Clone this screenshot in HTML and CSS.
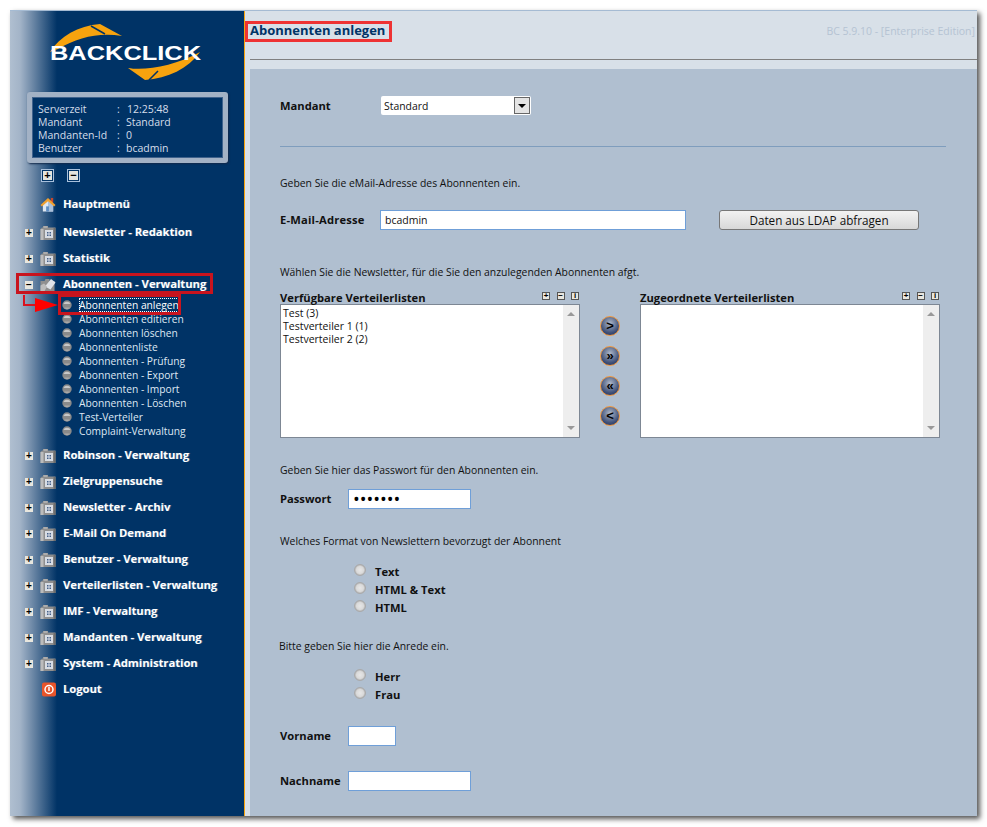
FILE: index.html
```html
<!DOCTYPE html>
<html lang="de">
<head>
    <meta http-equiv="Content-Type" content="text/html; charset=UTF-8">
    <title>Backclick - Abonnenten anlegen</title>
    <link rel="stylesheet" href="styles.css">
</head>
<body>
    <!-- Shared icons -->
    <svg class="defs" width="0" height="0">
        <symbol id="folder" viewBox="0 0 16 15">
            <path d="M1 3.500 2 2.500h1V1h5v1.500h7.500V15H0.500V4z" fill="#8f8f8f"/>
            <path d="M3.500 1.500h4v1h-4z" fill="#c8c8c8"/>
            <path d="M0.500 4h3v11h-3z" fill="#bcbcbc"/>
            <path d="M13.500 3h2v12h-2z" fill="#6d6d6d"/>
            <rect x="5" y="5" width="8" height="8" fill="#d8dde4"/>
            <path d="M7 7h1.500v1.500H7zM9.500 7H11v1.500H9.500zM7 9.500h1.500V11H7zM9.500 9.500H11V11H9.500z" fill="#44608a"/>
        </symbol>
        <symbol id="ball" viewBox="0 0 10 10">
            <circle cx="5" cy="5" r="4.700" fill="#8a8a8a"/>
            <path d="M1.500 4a3.600 3 0 0 1 7 0z" fill="#c8c8c8"/>
            <path d="M2 7.500h6a3.500 3.500 0 0 1-6 0z" fill="#a8a8a8"/>
        </symbol>
    </svg>

    <div class="window">
        <!-- Sidebar -->
        <aside class="sidebar">
            <svg class="logo" width="234" height="81" viewBox="0 0 234 81">
                <path d="M40 41C50 25 68 15 90 13L112 25C90 21 68 26 48 38z" fill="#f7a30e"/>
                <path d="M118 57C135 60 165 55 190 41C178 58 158 67 135 69z" fill="#f7a30e"/>
                <path d="M81 15L95 23M139 69L148 60" stroke="#003366" stroke-width="1.500"/>
                <text class="logo-text" x="40" y="49" textLength="151" lengthAdjust="spacingAndGlyphs">BACKCLICK</text>
            </svg>

            <div class="info-box">
                <span>Serverzeit</span><span>:</span><span class="info-time">12:25:48</span>
                <span>Mandant</span><span>:</span><span>Standard</span>
                <span>Mandanten-Id</span><span>:</span><span>0</span>
                <span>Benutzer</span><span>:</span><span>bcadmin</span>
            </div>

            <div class="tree-tools">
                <span class="tool-btn">+</span>
                <span class="tool-btn">&minus;</span>
            </div>

            <nav class="nav">
                <div class="nav-row nav-home">
                    <span class="toggle toggle-none"></span>
                    <svg class="nav-icon" viewBox="0 0 16 16">
                        <path d="M11 1h2.500v5H11z" fill="#c8472b"/>
                        <path d="M2.500 8v7.500h11V8L8 3.500z" fill="#dfe8f2"/>
                        <path d="M8 4.500l5.500 4v7H8z" fill="#a9c0dc"/>
                        <path d="M0 8.500L8 1l8 7.500-1.500 1.500L8 4.500 1.500 10z" fill="#f0a030"/>
                        <path d="M6 10h3v5.500H6z" fill="#5f8fc4"/>
                    </svg>
                    <span class="nav-label">Hauptmenü</span>
                </div>
                <div class="nav-row">
                    <span class="toggle">+</span>
                    <svg class="nav-icon"><use href="#folder"/></svg>
                    <span class="nav-label">Newsletter - Redaktion</span>
                </div>
                <div class="nav-row">
                    <span class="toggle">+</span>
                    <svg class="nav-icon"><use href="#folder"/></svg>
                    <span class="nav-label">Statistik</span>
                </div>
                <div class="nav-row">
                    <span class="toggle">&minus;</span>
                    <svg class="nav-icon" viewBox="0 0 16 15">
                        <path d="M0.500 4h4l1-2h4v2h5v11H0.500z" fill="#8f8f8f"/>
                        <path d="M5 9.500l6-7.500 4.500 3.500-5 7z" fill="#dfe3e8"/>
                        <path d="M0.500 8.500l3.500-2 3 3-3 5.500H0.500z" fill="#bcbcbc"/>
                    </svg>
                    <span class="nav-label">Abonnenten - Verwaltung</span>
                </div>
                <ul class="subnav">
                    <li class="sub-item"><svg class="sub-icon"><use href="#ball"/></svg><span class="sub-active">Abonnenten anlegen</span></li>
                    <li class="sub-item"><svg class="sub-icon"><use href="#ball"/></svg><span>Abonnenten editieren</span></li>
                    <li class="sub-item"><svg class="sub-icon"><use href="#ball"/></svg><span>Abonnenten löschen</span></li>
                    <li class="sub-item"><svg class="sub-icon"><use href="#ball"/></svg><span>Abonnentenliste</span></li>
                    <li class="sub-item"><svg class="sub-icon"><use href="#ball"/></svg><span>Abonnenten - Prüfung</span></li>
                    <li class="sub-item"><svg class="sub-icon"><use href="#ball"/></svg><span>Abonnenten - Export</span></li>
                    <li class="sub-item"><svg class="sub-icon"><use href="#ball"/></svg><span>Abonnenten - Import</span></li>
                    <li class="sub-item"><svg class="sub-icon"><use href="#ball"/></svg><span>Abonnenten - Löschen</span></li>
                    <li class="sub-item"><svg class="sub-icon"><use href="#ball"/></svg><span>Test-Verteiler</span></li>
                    <li class="sub-item"><svg class="sub-icon"><use href="#ball"/></svg><span>Complaint-Verwaltung</span></li>
                </ul>
                <div class="nav-row"><span class="toggle">+</span><svg class="nav-icon"><use href="#folder"/></svg><span class="nav-label">Robinson - Verwaltung</span></div>
                <div class="nav-row"><span class="toggle">+</span><svg class="nav-icon"><use href="#folder"/></svg><span class="nav-label">Zielgruppensuche</span></div>
                <div class="nav-row"><span class="toggle">+</span><svg class="nav-icon"><use href="#folder"/></svg><span class="nav-label">Newsletter - Archiv</span></div>
                <div class="nav-row"><span class="toggle">+</span><svg class="nav-icon"><use href="#folder"/></svg><span class="nav-label">E-Mail On Demand</span></div>
                <div class="nav-row"><span class="toggle">+</span><svg class="nav-icon"><use href="#folder"/></svg><span class="nav-label">Benutzer - Verwaltung</span></div>
                <div class="nav-row"><span class="toggle">+</span><svg class="nav-icon"><use href="#folder"/></svg><span class="nav-label">Verteilerlisten - Verwaltung</span></div>
                <div class="nav-row"><span class="toggle">+</span><svg class="nav-icon"><use href="#folder"/></svg><span class="nav-label">IMF - Verwaltung</span></div>
                <div class="nav-row"><span class="toggle">+</span><svg class="nav-icon"><use href="#folder"/></svg><span class="nav-label">Mandanten - Verwaltung</span></div>
                <div class="nav-row"><span class="toggle">+</span><svg class="nav-icon"><use href="#folder"/></svg><span class="nav-label">System - Administration</span></div>
                <div class="nav-row">
                    <span class="toggle toggle-none"></span>
                    <svg class="nav-icon" viewBox="0 0 16 14">
                        <rect x="2" y="0" width="14" height="14" rx="2" fill="#e8552b"/>
                        <circle cx="9" cy="7" r="4" fill="none" stroke="#fff" stroke-width="1.500"/>
                        <path d="M9 4.500v4" stroke="#fff" stroke-width="1.500"/>
                    </svg>
                    <span class="nav-label">Logout</span>
                </div>
            </nav>
        </aside>

        <!-- Main area -->
        <main class="main">
            <header class="main-head">
                <h1 class="page-title">Abonnenten anlegen</h1>
                <span class="version">BC 5.9.10 - [Enterprise Edition]</span>
            </header>

            <form class="form">
                <div class="row row-mandant">
                    <label class="label label-mandant">Mandant</label>
                    <div class="select-box">
                        <span class="select-value">Standard</span>
                        <span class="select-arrow"></span>
                    </div>
                </div>
                <hr class="divider">

                <p class="hint hint-email">Geben Sie die eMail-Adresse des Abonnenten ein.</p>
                <div class="row row-email">
                    <label class="label label-email">E-Mail-Adresse</label>
                    <input class="field field-email" type="text" value="bcadmin">
                    <button class="ldap-btn" type="button">Daten aus LDAP abfragen</button>
                </div>

                <p class="hint hint-lists">Wählen Sie die Newsletter, für die Sie den anzulegenden Abonnenten afgt.</p>
                <div class="lists">
                    <div class="list-col">
                        <div class="list-head">
                            <span class="label">Verfügbare Verteilerlisten</span>
                            <span class="mini-tools"><i class="mini-btn">+</i><i class="mini-btn">&minus;</i><i class="mini-btn">i</i></span>
                        </div>
                        <div class="listbox">
                            <div class="list-items">
                                <div>Test (3)</div>
                                <div>Testverteiler 1 (1)</div>
                                <div>Testverteiler 2 (2)</div>
                            </div>
                            <div class="scroll"><span class="arrow-up"></span><span class="arrow-down"></span></div>
                        </div>
                    </div>
                    <div class="move-btns">
                        <span class="move-btn">&gt;</span>
                        <span class="move-btn">&raquo;</span>
                        <span class="move-btn">&laquo;</span>
                        <span class="move-btn">&lt;</span>
                    </div>
                    <div class="list-col">
                        <div class="list-head">
                            <span class="label">Zugeordnete Verteilerlisten</span>
                            <span class="mini-tools"><i class="mini-btn">+</i><i class="mini-btn">&minus;</i><i class="mini-btn">i</i></span>
                        </div>
                        <div class="listbox">
                            <div class="list-items"></div>
                            <div class="scroll"><span class="arrow-up"></span><span class="arrow-down"></span></div>
                        </div>
                    </div>
                </div>

                <p class="hint hint-pass">Geben Sie hier das Passwort für den Abonnenten ein.</p>
                <div class="row row-pass">
                    <label class="label label-short">Passwort</label>
                    <input class="field field-pass field-dots" type="password" value="bcadmin">
                </div>

                <p class="hint hint-format">Welches Format von Newslettern bevorzugt der Abonnent</p>
                <div class="radios">
                    <div class="radio-row"><span class="radio"></span><span class="label">Text</span></div>
                    <div class="radio-row"><span class="radio"></span><span class="label">HTML &amp; Text</span></div>
                    <div class="radio-row"><span class="radio"></span><span class="label">HTML</span></div>
                </div>

                <p class="hint hint-salut">Bitte geben Sie hier die Anrede ein.</p>
                <div class="radios">
                    <div class="radio-row"><span class="radio"></span><span class="label">Herr</span></div>
                    <div class="radio-row"><span class="radio"></span><span class="label">Frau</span></div>
                </div>

                <div class="row row-first">
                    <label class="label label-short">Vorname</label>
                    <input class="field field-first" type="text">
                </div>
                <div class="row row-last">
                    <label class="label label-short">Nachname</label>
                    <input class="field field-pass" type="text">
                </div>
            </form>
        </main>

        <!-- Red annotations drawn over the screenshot -->
        <div class="mark mark-nav"></div>
        <div class="mark mark-sub"></div>
        <div class="mark mark-title"></div>
        <svg class="mark-arrow" width="36" height="20" viewBox="0 0 36 20">
            <path d="M1 0v10h12" fill="none" stroke="#d9121f" stroke-width="2"/>
            <path d="M12 3l23 7-23 7z" fill="#f00"/>
        </svg>
    </div>
</body>
</html>
```

FILE: styles.css
```css
* {
    box-sizing: border-box;
}
body {
    min-height: 827px;
    margin: 0;
    padding-top: 10px;
    background-color: #fff;
    font-family: 'Open Sans', 'Liberation Sans', sans-serif;
    font-size: 10.4px;
    color: #111;
}
.defs {
    position: absolute;
}
.window {
    position: relative;
    display: flex;
    width: 967px;
    height: 806px;
    margin-left: 10px;
    border-top: 1px solid #a5bbd3;
    box-shadow: 3px 3px 5px #555;
    overflow: hidden;
}

/* Sidebar */
.sidebar {
    flex: none;
    width: 235px;
    color: #fff;
    border-right: 1px solid #f7a30e;
    background: linear-gradient(to right, #b0bfd0 0, #a3b4c8 10px, #6f8aa8 22px, #003366 47px);
}
.logo {
    display: block;
}
.logo-text {
    font-family: 'Liberation Sans', sans-serif;
    font-size: 21px;
    font-weight: bold;
    fill: #fff;
}
.info-box {
    display: grid;
    grid-template-columns: 79px 9px 1fr;
    grid-auto-rows: 13px;
    align-items: center;
    width: 201px;
    height: 71px;
    margin-left: 17px;
    padding: 5px 0 0 6px;
    color: #d5deea;
    background-color: #003366;
    border: 5px solid #a3b2c5;
    border-radius: 3px;
    box-shadow: inset 0 0 0 1px #3f628c, 1px 1px 2px #12294a;
    font-size: 10.5px;
}
.info-time {
    padding-left: 1px;
}
.tree-tools {
    display: flex;
    gap: 13px;
    height: 28px;
    padding: 6px 0 0 31px;
}
.tool-btn {
    display: flex;
    align-items: center;
    justify-content: center;
    width: 13px;
    height: 13px;
    color: #000;
    background-color: #e4e4de;
    border: 1px solid #a8c0dc;
    outline: 1px solid #003366;
    outline-offset: -2px;
    font-family: 'Liberation Sans', sans-serif;
    font-size: 11px;
    font-weight: bold;
    line-height: 1;
}
.nav-row {
    display: flex;
    align-items: center;
    height: 26px;
    padding-left: 15px;
}
.nav-home {
    margin-bottom: 2px;
}
.toggle {
    display: flex;
    flex: none;
    align-items: center;
    justify-content: center;
    width: 8px;
    height: 8px;
    margin-top: 2px;
    color: #000;
    background-color: #e8e6de;
    font-family: 'Liberation Sans', sans-serif;
    font-size: 10px;
    font-weight: bold;
    line-height: 1;
}
.toggle-none {
    background: none;
}
.nav-icon {
    flex: none;
    width: 16px;
    height: 15px;
    margin-left: 7px;
}
.nav-label {
    margin-left: 7px;
    padding-bottom: 2px;
    font-size: 11.2px;
    font-weight: 700;
    white-space: nowrap;
    text-shadow: 1px 0 0 rgba(255, 255, 255, 0.25);
}
.subnav {
    margin: 1px 0 4px;
    padding: 0;
    list-style: none;
}
.sub-item {
    display: flex;
    align-items: center;
    height: 14px;
    padding-left: 52px;
    color: #dfe8f3;
    font-size: 10.25px;
}
.sub-icon {
    flex: none;
    width: 10px;
    height: 10px;
    margin-right: 7px;
}
.sub-active {
    outline: 1px dotted #fff;
    outline-offset: -1px;
    color: #fff;
}

/* Main area */
.main {
    display: flex;
    flex: 1;
    flex-direction: column;
    min-width: 0;
    background-color: #d8e0e8;
}
.main-head {
    display: flex;
    flex: none;
    justify-content: space-between;
    height: 49px;
    margin-left: 5px;
    padding-top: 10px;
    border-bottom: 1px solid #808080;
}
.page-title {
    margin: 0;
    color: #003366;
    font-size: 13px;
    font-weight: 700;
    line-height: 18px;
}
.version {
    margin-top: 1px;
    padding-right: 2px;
    color: #b5c3d3;
    line-height: 18px;
    font-size: 10.5px;
}
.form {
    flex: 1;
    min-height: 0;
    margin: 9px 0 0 5px;
    padding: 27px 31px 0 30px;
    background-color: #b0bfd0;
    overflow: hidden;
}
.row {
    display: flex;
    align-items: center;
}
.label {
    font-weight: 700;
    font-size: 11.2px;
    white-space: nowrap;
}
.label-mandant {
    width: 101px;
    margin-top: 2px;
}
.label-email {
    width: 100px;
    padding-bottom: 2px;
    letter-spacing: 0.2px;
}
.label-short {
    width: 68px;
    padding-bottom: 2px;
}
.row-mandant {
    align-items: flex-start;
    height: 20px;
}
.select-box {
    display: flex;
    align-items: center;
    justify-content: space-between;
    width: 150px;
    height: 19px;
    padding: 0 1px 0 3px;
    background-color: #fff;
    border-radius: 2px;
}
.select-arrow {
    position: relative;
    width: 16px;
    height: 17px;
    background-color: #e4e4e4;
    border: 1px solid #666;
}
.select-arrow::after {
    content: "";
    position: absolute;
    top: 6px;
    left: 3px;
    border-top: 4px solid #000;
    border-left: 4px solid transparent;
    border-right: 4px solid transparent;
}
.divider {
    height: 1px;
    margin: 30px 0 0;
    background-color: #7f9dbd;
    border: 0;
}
.hint {
    margin: 0;
    line-height: 14px;
    white-space: nowrap;
}
.hint-email {
    margin-top: 29px;
}
.row-email {
    height: 20px;
    margin-top: 20px;
}
.field {
    height: 20px;
    padding: 0 4px;
    background-color: #fff;
    border: 1px solid #6f9fd8;
    border-radius: 0;
    color: #111;
    font-family: inherit;
    font-size: 10.5px;
}
.field-email {
    width: 306px;
}
.field-pass {
    width: 123px;
}
.field-dots {
    color: #000;
    font-size: 18px;
}
.field-first {
    width: 48px;
}
.ldap-btn {
    width: 200px;
    height: 20px;
    margin-left: 33px;
    padding: 0;
    color: #111;
    background: linear-gradient(to bottom, #f2f2f2, #d8d8d8);
    border: 1px solid #777;
    border-radius: 3px;
    font-family: inherit;
    font-size: 11.7px;
}
.hint-lists {
    margin-top: 35px;
}
.lists {
    display: flex;
    margin-top: 12px;
}
.list-col {
    width: 300px;
}
.list-head {
    display: flex;
    align-items: center;
    justify-content: space-between;
    height: 13px;
    margin-bottom: 0;
}
.mini-tools {
    display: flex;
    gap: 6.5px;
    margin-right: 1px;
}
.mini-btn {
    display: flex;
    align-items: center;
    justify-content: center;
    width: 8px;
    height: 8px;
    margin-top: -3px;
    color: #000;
    background-color: #e8e6de;
    border: 1px solid #555;
    font-family: 'Liberation Sans', sans-serif;
    font-size: 8px;
    font-style: normal;
    font-weight: bold;
    line-height: 1;
}
.listbox {
    display: flex;
    height: 134px;
    background-color: #fff;
    border: 1px solid #7d8794;
}
.list-items {
    flex: 1;
    padding: 2px;
    font-size: 10.5px;
    line-height: 13px;
}
.scroll {
    display: flex;
    flex: none;
    flex-direction: column;
    justify-content: space-between;
    align-items: center;
    width: 16px;
    padding: 7px 0;
    background-color: #eee;
}
.arrow-up {
    border-bottom: 4px solid #999;
    border-left: 4px solid transparent;
    border-right: 4px solid transparent;
}
.arrow-down {
    border-top: 4px solid #999;
    border-left: 4px solid transparent;
    border-right: 4px solid transparent;
}
.move-btns {
    display: flex;
    flex-direction: column;
    align-items: center;
    gap: 10px;
    width: 60px;
    padding-top: 25px;
}
.move-btn {
    display: flex;
    align-items: center;
    justify-content: center;
    width: 20px;
    height: 20px;
    padding-bottom: 2px;
    color: #000;
    background: radial-gradient(circle at 50% 35%, #aeb8c8, #3d4f78 65%, #22305a);
    border: 1px solid #f0963c;
    border-radius: 50%;
    font-family: 'Liberation Sans', sans-serif;
    font-size: 13px;
    font-weight: bold;
}
.hint-pass {
    margin-top: 25px;
}
.row-pass {
    margin-top: 12px;
}
.hint-format {
    margin-top: 25px;
}
.radios {
    margin-top: 14px;
    padding-left: 74px;
}
.radio-row {
    display: flex;
    align-items: center;
    height: 18px;
}
.radio {
    width: 12px;
    height: 12px;
    margin: -3px 9px 0 0;
    background: radial-gradient(circle at 50% 50%, #e6e6e6, #dadada 50%, #8f8f8f 100%);
    border: 1px solid #aaa;
    border-radius: 50%;
}
.hint-salut {
    margin-top: 23px;
    margin-left: -1px;
}
.row-first {
    margin-top: 23px;
}
.row-last {
    margin-top: 25px;
}

/* Annotations */
.mark {
    position: absolute;
    border: 3px solid #c8141e;
}
.mark-nav {
    top: 262px;
    left: 6px;
    width: 197px;
    height: 21px;
}
.mark-sub {
    top: 283px;
    left: 48px;
    width: 123px;
    height: 21px;
}
.mark-title {
    top: 10px;
    left: 235px;
    width: 147px;
    height: 21px;
    border-color: #ee3333;
}
.mark-arrow {
    position: absolute;
    top: 284px;
    left: 13px;
}
```
